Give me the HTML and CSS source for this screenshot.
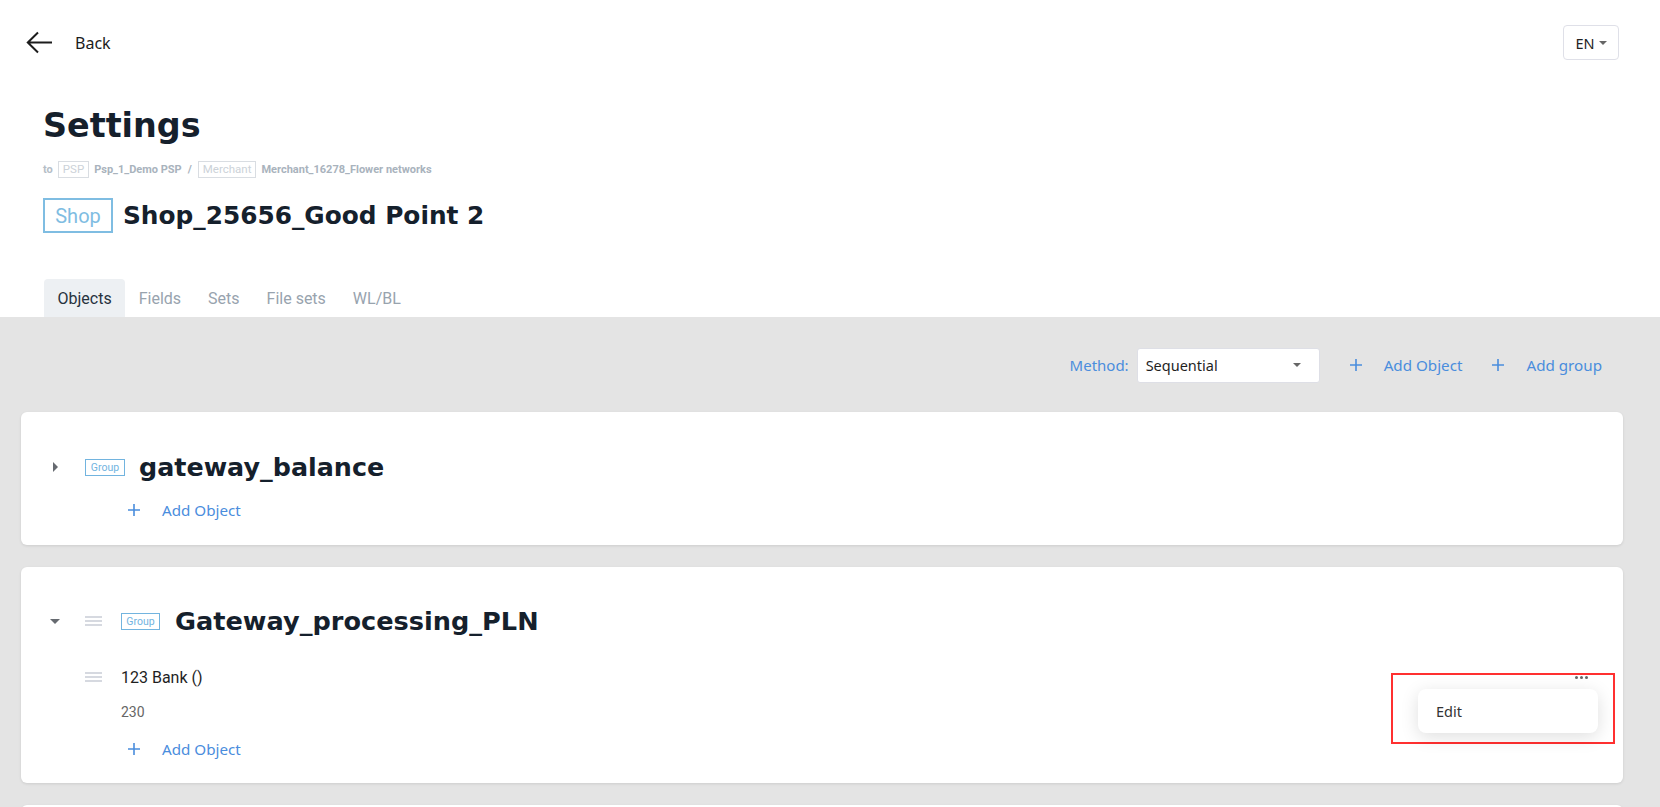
FILE: index.html
```html
<!DOCTYPE html>
<html lang="en">
<head>
<meta charset="utf-8">
<title>Settings</title>
<link rel="stylesheet" href="styles.css">
</head>
<body>
<div class="top">
  <div class="topbar">
    <a class="back">
      <svg class="back-icon" width="27" height="23" viewBox="0 0 27 23"><path d="M26 11.5H2M12 1.5L1.8 11.5L12 21.5" fill="none" stroke="#1c1c1c" stroke-width="2"/></svg>
      <span class="back-text">Back</span>
    </a>
    <button class="lang">EN <span class="caret-sm"></span></button>
  </div>
  <div class="title-block">
    <h1 class="page-title">Settings</h1>
    <div class="crumbs">
      <span class="crumb-to">to</span>
      <span class="crumb-tag">PSP</span>
      <span class="crumb-name">Psp_1_Demo PSP</span>
      <span class="crumb-sep">/</span>
      <span class="crumb-tag">Merchant</span>
      <span class="crumb-name">Merchant_16278_Flower networks</span>
    </div>
    <div class="shop-row">
      <span class="shop-badge">Shop</span>
      <h2 class="shop-title">Shop_25656_Good Point 2</h2>
    </div>
  </div>
  <nav class="tabs">
    <span class="tab active">Objects</span>
    <span class="tab">Fields</span>
    <span class="tab">Sets</span>
    <span class="tab">File sets</span>
    <span class="tab">WL/BL</span>
  </nav>
</div>

<main class="content">
  <div class="toolbar">
    <span class="method-label">Method:</span>
    <div class="select"><span>Sequential</span><span class="caret-sm"></span></div>
    <a class="add-btn tb-btn"><svg class="plus" width="12" height="12" viewBox="0 0 12 12"><path d="M6 0V12M0 6H12" stroke="currentColor" stroke-width="1.6"/></svg><span>Add Object</span></a>
    <a class="add-btn tb-btn"><svg class="plus" width="12" height="12" viewBox="0 0 12 12"><path d="M6 0V12M0 6H12" stroke="currentColor" stroke-width="1.6"/></svg><span>Add group</span></a>
  </div>

  <section class="card card-collapsed">
    <div class="group-row">
      <span class="tri-right"></span>
      <span class="group-badge g1">Group</span>
      <h3 class="group-title g1t">gateway_balance</h3>
    </div>
    <a class="add-btn add-in-card a1"><svg class="plus" width="12" height="12" viewBox="0 0 12 12"><path d="M6 0V12M0 6H12" stroke="currentColor" stroke-width="1.6"/></svg><span>Add Object</span></a>
  </section>

  <section class="card card-open">
    <div class="group-row">
      <span class="tri-down"></span>
      <span class="handle"></span>
      <span class="group-badge g2">Group</span>
      <h3 class="group-title g2t">Gateway_processing_PLN</h3>
    </div>
    <div class="object-row">
      <span class="handle"></span>
      <span class="object-name">123 Bank ()</span>
      <span class="dots"><i></i><i></i><i></i></span>
    </div>
    <div class="object-value">230</div>
    <a class="add-btn add-in-card a2"><svg class="plus" width="12" height="12" viewBox="0 0 12 12"><path d="M6 0V12M0 6H12" stroke="currentColor" stroke-width="1.6"/></svg><span>Add Object</span></a>

    <div class="annot"></div>
    <div class="menu"><span class="menu-item">Edit</span></div>
  </section>

  <section class="card card-next"></section>
</main>
</body>
</html>
```

FILE: styles.css
```css
html, body { margin: 0; padding: 0; overflow: hidden; }
body {
  width: 1660px;
  height: 807px;
  background: #fff;
  font-family: "Noto Sans", "Open Sans", sans-serif;
  color: #1c1c1c;
}
h1, h2, h3 { margin: 0; }

.top { background: #fff; height: 317px; display: flex; flex-direction: column; }

.topbar {
  display: flex;
  align-items: center;
  justify-content: space-between;
  padding: 25px 41px 0 26px;
  height: 35px;
}
.back { display: flex; align-items: center; cursor: pointer; }
.back-icon { display: block; }
.back-text { margin-left: 22px; font-size: 16px; color: #1c1c1c; }

.lang {
  width: 56px;
  height: 35px;
  border: 1px solid #dfe0e8;
  border-radius: 4px;
  background: #fff;
  font-family: "Noto Sans", sans-serif;
  font-size: 14.5px;
  color: #222;
  display: flex;
  align-items: center;
  justify-content: center;
  gap: 4px;
  padding: 0;
}
.caret-sm {
  display: inline-block;
  width: 0; height: 0;
  border-left: 4px solid transparent;
  border-right: 4px solid transparent;
  border-top: 4px solid #666;
}

.title-block { padding-left: 43px; }
.page-title {
  margin-top: 44px;
  font-family: "DejaVu Sans", sans-serif;
  font-weight: 700;
  font-size: 33.4px;
  line-height: 44px;
  color: #15202c;
}
.crumbs {
  margin-top: 13px;
  display: flex;
  align-items: center;
  height: 16px;
  font-family: "Roboto", sans-serif;
  font-size: 11px;
  font-weight: 700;
  color: #a9b3bd;
}
.crumb-to { color: #b5bec7; margin-right: 5px; }
.crumb-tag {
  border: 1px solid #d9dde2;
  color: #ccd2d8;
  font-weight: 400;
  padding: 0 4px;
  height: 15px;
  line-height: 15px;
  margin-right: 5px;
  font-size: 11.5px;
}
.crumb-name { margin-right: 6px; }
.crumb-sep { margin-right: 6px; }

.shop-row { margin-top: 21px; display: flex; align-items: center; height: 35px; }
.shop-badge {
  box-sizing: border-box;
  height: 35px;
  width: 70px;
  border: 2px solid #7fbde2;
  color: #7fbde2;
  font-family: "Roboto", sans-serif;
  font-size: 20px;
  display: flex;
  align-items: center;
  justify-content: center;
}
.shop-title {
  margin-left: 10px;
  font-family: "DejaVu Sans", sans-serif;
  font-weight: 700;
  font-size: 24.8px;
  color: #15202c;
}

.tabs { margin-top: auto; display: flex; padding-left: 44px; height: 38px; }
.tab {
  padding: 0 13.5px;
  font-family: "Roboto", sans-serif;
  font-size: 16px;
  color: #98a3ae;
  display: flex;
  align-items: center;
  border-radius: 4px 4px 0 0;
}
.tab.active { background: #edf0f3; color: #27323d; }

.content {
  background: #e4e4e4;
  height: 490px;
  padding: 31px 37px 0 21px;
}
.toolbar {
  display: flex;
  align-items: center;
  justify-content: flex-end;
  height: 34px;
  padding-right: 21px;
  margin-bottom: 30px;
  font-family: "Noto Sans", sans-serif;
}
.method-label { color: #4a8ddd; font-size: 15px; margin-right: 8px; }
.select {
  box-sizing: border-box;
  width: 183px;
  height: 35px;
  background: #fff;
  border: 1px solid #dedfe6;
  border-radius: 3px;
  display: flex;
  align-items: center;
  justify-content: space-between;
  padding: 0 18px 0 8px;
  font-size: 14.5px;
  color: #1f1f1f;
}
.add-btn {
  display: flex;
  align-items: center;
  color: #4a8ddd;
  font-size: 15.2px;
  cursor: pointer;
}
.tb-btn { margin-left: 30px; }
.plus { display: block; margin-right: 22px; flex: none; }

.card {
  background: #fff;
  border-radius: 6px;
  box-shadow: 0 1px 3px rgba(0,0,0,0.1);
  margin-bottom: 22px;
  position: relative;
}
.card-collapsed { height: 133px; box-sizing: border-box; padding-top: 35px; }
.card-open { height: 216px; box-sizing: border-box; padding-top: 34px; }
.card-next { height: 40px; }

.group-row { display: flex; align-items: center; height: 40px; }
.tri-right {
  width: 0; height: 0;
  border-top: 5px solid transparent;
  border-bottom: 5px solid transparent;
  border-left: 5px solid #666a70;
  margin-left: 32px;
  margin-right: 27px;
  flex: none;
}
.tri-down {
  width: 0; height: 0;
  border-left: 5px solid transparent;
  border-right: 5px solid transparent;
  border-top: 5px solid #666a70;
  margin-left: 29px;
  margin-right: 25px;
  flex: none;
}
.handle {
  width: 17px;
  height: 10px;
  border-top: 2px solid #d6d9e0;
  border-bottom: 2px solid #d6d9e0;
  position: relative;
  box-sizing: border-box;
  flex: none;
}
.handle::after {
  content: "";
  position: absolute;
  left: 0; right: 0;
  top: 2px;
  height: 2px;
  background: #d6d9e0;
}
.card-open .group-row .handle { margin-right: 19px; }
.group-badge {
  box-sizing: border-box;
  height: 17px;
  border: 1px solid #72b4df;
  color: #72b4df;
  font-family: "Roboto", sans-serif;
  font-size: 10.5px;
  display: flex;
  align-items: center;
  justify-content: center;
  flex: none;
}
.g1 { width: 40px; }
.g2 { width: 39px; }
.group-title {
  font-family: "DejaVu Sans", sans-serif;
  font-weight: 700;
  font-size: 25.4px;
  color: #15202c;
}
.g1t { margin-left: 14px; }
.g2t { margin-left: 15px; font-size: 25.6px; }

.add-in-card { height: 24px; margin-left: 107px; }
.a1 { margin-top: 11px; }
.a2 { margin-top: 13px; }

.object-row {
  display: flex;
  align-items: center;
  height: 24px;
  margin-top: 24px;
  padding-left: 64px;
  padding-right: 35px;
}
.object-name {
  margin-left: 19px;
  font-family: "Roboto", sans-serif;
  font-size: 16px;
  color: #1f1f1f;
}
.dots { margin-left: auto; display: flex; gap: 2px; align-items: center; }
.dots i { width: 3px; height: 3px; border-radius: 50%; background: #666; display: block; }
.object-value {
  margin-top: 11px;
  padding-left: 100px;
  height: 24px;
  line-height: 24px;
  font-family: "Roboto", sans-serif;
  font-size: 14px;
  color: #666;
}

.annot {
  position: absolute;
  left: 1370px;
  top: 106px;
  width: 224px;
  height: 71px;
  box-sizing: border-box;
  border: 2px solid #ff3030;
  pointer-events: none;
}
.menu {
  position: absolute;
  left: 1397px;
  top: 122px;
  width: 180px;
  height: 44px;
  background: #fff;
  border-radius: 8px;
  box-shadow: 0 4px 18px rgba(0,0,0,0.13);
  display: flex;
  align-items: center;
}
.menu-item { margin-left: 18px; font-size: 14.5px; color: #333; }
```
